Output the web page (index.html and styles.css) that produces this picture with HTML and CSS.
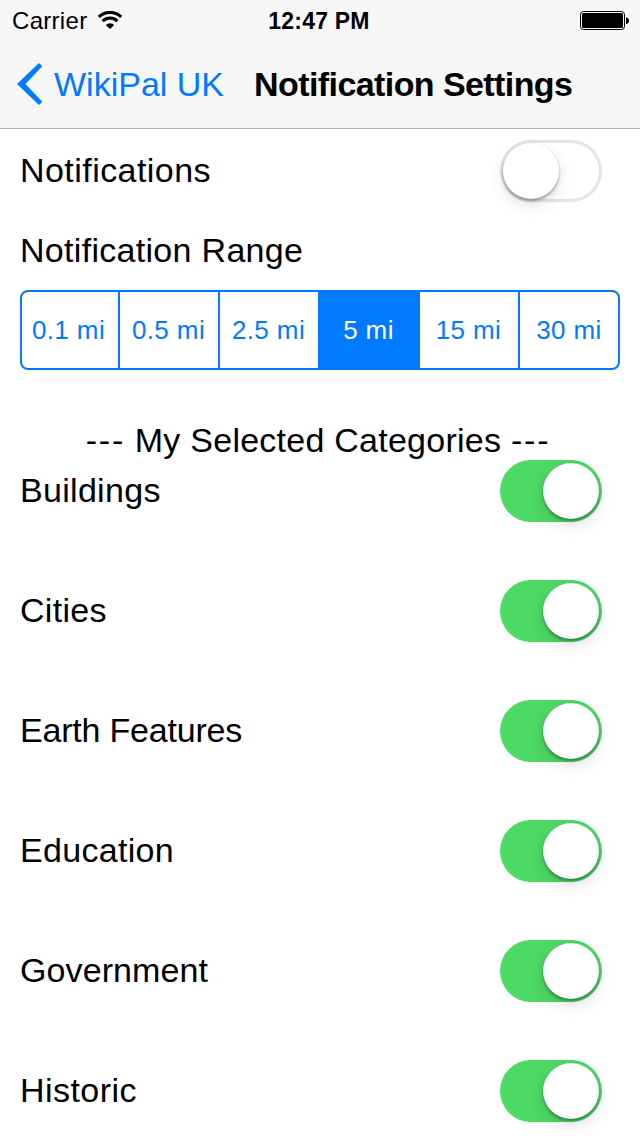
FILE: index.html
```html
<!DOCTYPE html>
<html lang="en">
<head>
    <meta charset="UTF-8">
    <meta name="viewport" content="width=device-width, initial-scale=1.0">
    <title>Notification Settings</title>
    <link rel="stylesheet" href="styles.css">
</head>
<body>
    <header class="header">
        <div class="status-bar">
            <div class="status-left">
                <span class="carrier">Carrier</span>
                <svg class="wifi" width="26" height="18" viewBox="0 0 26 18">
                    <path d="M1.8 5.8a16.4 16.4 0 0 1 22.4 0M5.6 10.1a10.6 10.6 0 0 1 14.8 0" fill="none" stroke="#000" stroke-width="3"/>
                    <path d="M8.8 13.9a6.2 6.2 0 0 1 8.4 0L13 18z"/>
                </svg>
            </div>
            <span class="time">12:47 PM</span>
            <div class="status-right">
                <svg width="50" height="20" viewBox="0 0 50 20">
                    <rect x="0.5" y="0.5" width="44" height="18" rx="3" fill="none" stroke="#000"/>
                    <rect x="2" y="2" width="41" height="15" rx="1.5"/>
                    <path d="M46 6.5c4 0 4 6.5 0 6.5z"/>
                </svg>
            </div>
        </div>
        <nav class="nav">
            <a class="back">
                <svg width="26" height="42" viewBox="0 0 26 42">
                    <path d="M0 21L22 0l3.3 3.3L8.4 21l16.9 17.7L22 42z" fill="#007aff"/>
                </svg>
                <span class="back-text">WikiPal UK</span>
            </a>
            <h1 class="title">Notification Settings</h1>
        </nav>
    </header>

    <main class="content">
        <div class="row">
            <span class="label notifications">Notifications</span>
            <span class="switch"><span class="thumb"></span></span>
        </div>
        <div class="range-label"><span class="label range">Notification Range</span></div>
        <div class="segments">
            <span class="segment">0.1 mi</span>
            <span class="segment">0.5 mi</span>
            <span class="segment">2.5 mi</span>
            <span class="segment active">5 mi</span>
            <span class="segment">15 mi</span>
            <span class="segment">30 mi</span>
        </div>
        <h2 class="heading"><span class="dashes">---</span> My Selected Categories <span class="dashes">---</span></h2>
        <div class="categories">
            <div class="row">
                <span class="label">Buildings</span>
                <span class="switch on"><span class="thumb"></span></span>
            </div>
            <div class="row">
                <span class="label">Cities</span>
                <span class="switch on"><span class="thumb"></span></span>
            </div>
            <div class="row">
                <span class="label earth">Earth Features</span>
                <span class="switch on"><span class="thumb"></span></span>
            </div>
            <div class="row">
                <span class="label">Education</span>
                <span class="switch on"><span class="thumb"></span></span>
            </div>
            <div class="row">
                <span class="label government">Government</span>
                <span class="switch on"><span class="thumb"></span></span>
            </div>
            <div class="row">
                <span class="label historic">Historic</span>
                <span class="switch on"><span class="thumb"></span></span>
            </div>
        </div>
    </main>
</body>
</html>
```
FILE: styles.css
```css
*{
    box-sizing: border-box;
    margin: 0;
    padding: 0;
}
body{
    height: 1136px;
    overflow: hidden;
    background-color: #fff;
    color: #000;
    font-family: "Liberation Sans", Arial, sans-serif;
    font-size: 34px;
}
svg{
    display: block;
}
.header{
    height: 129px;
    background-color: #f7f7f7;
    border-bottom: 1px solid #b2b2b2;
}
.status-bar{
    display: flex;
    height: 40px;
    padding: 0 10px 0 12px;
    align-items: center;
    font-size: 24px;
}
.status-left,
.status-right{
    display: flex;
    flex: 1;
    align-items: center;
}
.status-left{
    gap: 10px;
}
.status-right{
    justify-content: flex-end;
    padding-bottom: 1px;
}
.status-right svg{
    margin-top: 2px;
}
.carrier{
    padding-top: 2px;
    letter-spacing: 0.3px;
}
.time{
    padding-top: 2px;
    margin-right: 4px;
    font-size: 23px;
    font-weight: bold;
    letter-spacing: 0.2px;
}
.nav{
    display: flex;
    height: 88px;
    padding-left: 17px;
    align-items: center;
}
.back{
    display: flex;
    width: 237px;
    align-items: center;
    gap: 11px;
    color: #007aff;
    white-space: nowrap;
}
.title{
    font-size: 34px;
    font-weight: bold;
    letter-spacing: -0.58px;
    white-space: nowrap;
}
.content{
    padding: 11px 20px 0;
}
.row{
    display: flex;
    height: 62px;
    padding-right: 18px;
    align-items: center;
    justify-content: space-between;
}
.label{
    padding-bottom: 2px;
    letter-spacing: 0.3px;
}
.notifications{
    letter-spacing: 0.45px;
}
.earth{
    letter-spacing: -0.2px;
}
.government{
    letter-spacing: 0.1px;
}
.historic{
    letter-spacing: 0.45px;
}
.range-label{
    display: flex;
    height: 88px;
    padding-top: 10px;
    align-items: center;
}
/* range picker */
.segments{
    display: flex;
    height: 80px;
    border: 2px solid #007aff;
    border-radius: 8px;
    overflow: hidden;
}
.segment{
    display: flex;
    width: 100px;
    padding-right: 1px;
    align-items: center;
    justify-content: center;
    border-right: 2px solid #007aff;
    color: #007aff;
    font-size: 26px;
    letter-spacing: 0.4px;
}
.segment:first-child,
.segment:last-child{
    width: 98px;
}
.segment:first-child{
    padding-right: 3px;
}
.segment:last-child{
    padding-right: 0;
    border-right: 0;
}
.active{
    background-color: #007aff;
    color: #fff;
}
.heading{
    height: 40px;
    margin-top: 50px;
    padding-right: 4px;
    font-size: 34px;
    font-weight: normal;
    letter-spacing: 0.25px;
    line-height: 40px;
    text-align: center;
}
.dashes{
    letter-spacing: 1.8px;
}
.categories{
    display: flex;
    flex-direction: column;
    gap: 58px;
}
/* switches */
.switch{
    display: flex;
    width: 102px;
    height: 62px;
    padding: 3px;
    border-radius: 31px;
    box-shadow: inset 0 0 0 3px #e5e5e5;
}
.thumb{
    width: 56px;
    height: 56px;
    border-radius: 50%;
    background-color: #fff;
    box-shadow: 0 2px 3px rgba(0, 0, 0, 0.35), 0 6px 16px rgba(0, 0, 0, 0.12);
}
.on{
    justify-content: flex-end;
    background-color: #4cd964;
    box-shadow: none;
}
```
